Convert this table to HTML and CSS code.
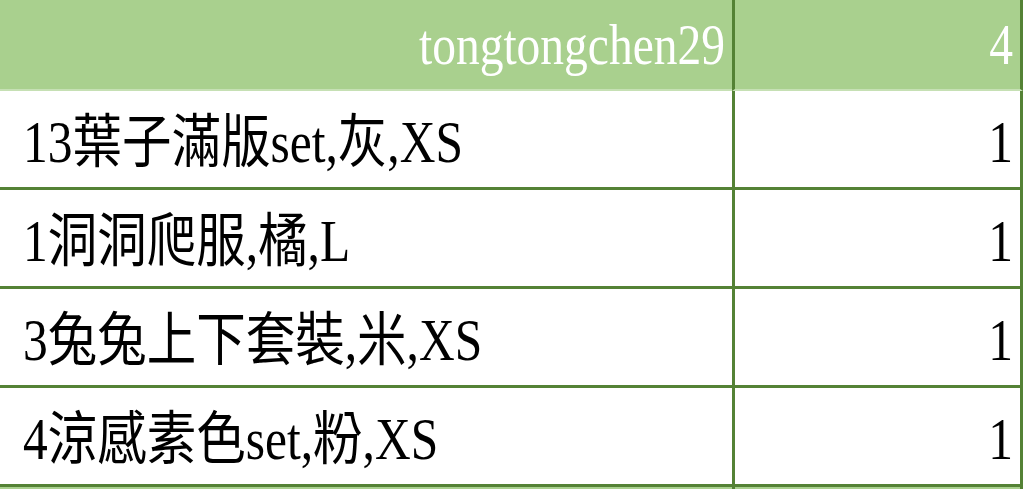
FILE: index.html
```html
<!DOCTYPE html>
<html lang="zh-Hant">
<head>
<meta charset="utf-8">
<link rel="stylesheet" href="styles.css">
</head>
<body>
<div class="sheet">
  <div class="row head">
    <div class="cell name"><span class="txt">tongtongchen29</span></div>
    <div class="cell qty"><span class="txt">4</span></div>
  </div>
  <div class="row item">
    <div class="cell name left"><span class="txt">13葉子滿版set,灰,XS</span></div>
    <div class="cell qty"><span class="txt">1</span></div>
  </div>
  <div class="row item">
    <div class="cell name left"><span class="txt">1洞洞爬服,橘,L</span></div>
    <div class="cell qty"><span class="txt">1</span></div>
  </div>
  <div class="row item">
    <div class="cell name left"><span class="txt">3兔兔上下套裝,米,XS</span></div>
    <div class="cell qty"><span class="txt">1</span></div>
  </div>
  <div class="row item">
    <div class="cell name left"><span class="txt">4涼感素色set,粉,XS</span></div>
    <div class="cell qty"><span class="txt">1</span></div>
  </div>
  <div class="row head">
    <div class="cell name"><span class="txt">&nbsp;</span></div>
    <div class="cell qty"><span class="txt">&nbsp;</span></div>
  </div>
</div>
</body>
</html>
```
FILE: styles.css
```css
html, body {
  margin: 0;
  padding: 0;
  background: #ffffff;
  overflow: hidden;
}
.sheet {
  width: 1024px;
  height: 489px;
  overflow: hidden;
  font-family: "Liberation Serif", "Noto Sans CJK TC", serif;
}
.row {
  display: grid;
  grid-template-columns: 732px 291px;
}
.cell {
  display: flex;
  align-items: flex-end;
  justify-content: flex-end;
  box-sizing: border-box;
  padding: 0 7px 15px 0;
}
.cell.left {
  justify-content: flex-start;
  padding-left: 23px;
}
.qty {
  border-left: 3px solid #548235;
  border-right: 3px solid #548235;
}
.head .cell {
  height: 91px;
  background: #a9d08e;
  color: #ffffff;
  font-size: 47.5px;
  border-bottom: 2px solid #c6e0b4;
}
.item .cell {
  height: 99px;
  color: #000000;
  font-size: 49.5px;
  border-bottom: 3px solid #548235;
}
.txt {
  display: inline-block;
  line-height: 1;
  white-space: nowrap;
  transform: scaleY(1.18);
  transform-origin: 50% 100%;
}
```
